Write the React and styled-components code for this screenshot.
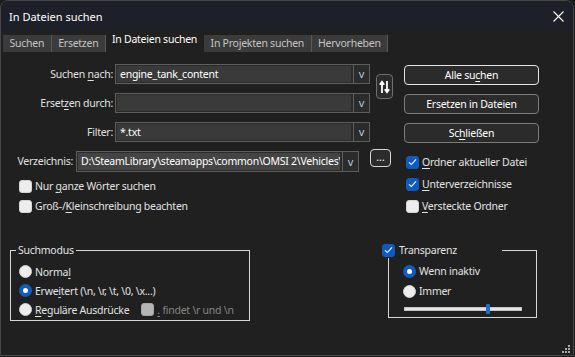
import React from 'react';
import styled, { createGlobalStyle } from 'styled-components';

const GlobalStyle = createGlobalStyle`
  html, body { margin: 0; padding: 0; background: #1a1a1a; }
  body {
    font-family: "Noto Sans", "Open Sans", sans-serif;
    font-size: 10.5px;
    letter-spacing: -0.25px;
    color: #e2e2e2;
  }
  * { box-sizing: border-box; }
  fieldset { min-inline-size: 0; }
`;

const Window = styled.div`
  position: relative;
  width: 574px;
  height: 356px;
  background: #202020;
  border: 1px solid #474747;
  border-radius: 8px 8px 0 0;
  overflow: hidden;
  display: flex;
  flex-direction: column;
`;

const TitleBar = styled.div`
  height: 30px;
  flex: none;
  background: #1d2029;
  display: flex;
  align-items: center;
  justify-content: space-between;
  padding: 0 9px 0 8px;
  font-size: 11px;
  letter-spacing: 0;
  color: #ffffff;
`;

const TabBar = styled.div`
  height: 21px;
  flex: none;
  display: flex;
  align-items: flex-end;
  padding-left: 2px;
`;

const Tab = styled.div`
  height: ${p => (p.$active ? 21 : 17)}px;
  line-height: ${p => (p.$active ? 16 : 17)}px;
  padding: 0 ${p => (p.$active ? 6 : 6.5)}px;
  background: ${p => (p.$active ? '#202020' : '#3b3b3b')};
  color: ${p => (p.$active ? '#ffffff' : '#c4c4c4')};
  border-right: 1px solid ${p => (p.$active ? '#202020' : '#595959')};
  white-space: nowrap;
`;

const Main = styled.div`
  flex: 1;
  display: flex;
  flex-direction: column;
  padding-top: 12px;
`;

const TopGrid = styled.div`
  display: grid;
  grid-template-columns: 394px 135px;
  column-gap: 9px;
  align-items: start;
`;

const LeftCol = styled.div`
  display: flex;
  flex-direction: column;
`;

const TopFields = styled.div`
  display: flex;
  align-items: flex-start;
`;

const FieldStack = styled.div`
  display: flex;
  flex-direction: column;
  gap: 9px;
`;

const FieldRow = styled.div`
  display: flex;
  align-items: center;
  height: 20px;
`;

const Label = styled.div`
  width: ${p => p.$w}px;
  text-align: right;
  color: #e0e0e0;
  white-space: nowrap;
  flex: none;
`;

const Combo = styled.div`
  display: flex;
  flex: none;
  width: ${p => p.$w}px;
  height: ${p => p.$h || 20}px;
  margin-left: ${p => p.$ml || 0}px;
  margin-top: ${p => p.$mt || 0}px;
  border: 1px solid #5e5e5e;
  background: #2b2b2b;
`;

const EditWrap = styled.div`
  flex: 1;
  min-width: 0;
  display: flex;
  padding: 1px 2px 1px 1px;
  overflow: hidden;
`;

const Edit = styled.div`
  flex: 1;
  min-width: 0;
  background: ${p => (p.$sel ? '#444444' : '#3a3a3a')};
  color: #ffffff;
  padding-left: 3px;
  line-height: ${p => p.$lh || 16}px;
  white-space: nowrap;
  overflow: hidden;
`;

const Arrow = styled.div`
  width: 16px;
  flex: none;
  border-left: 1px solid #5e5e5e;
  display: flex;
  align-items: center;
  justify-content: center;
  color: #b4c6dc;
  font-size: 11px;
  padding-bottom: 1px;
`;

const SwapButton = styled.div`
  width: 17px;
  height: 25px;
  margin: 10px 0 0 6px;
  border: 1px solid #6e6e6e;
  border-radius: 4px;
  background: #2b2b2b;
  display: flex;
  align-items: center;
  justify-content: center;
`;

const DirRow = styled.div`
  display: flex;
  align-items: flex-start;
  margin-top: 7px;
`;

const DirLabel = styled(Label)`
  height: 21px;
  line-height: 21px;
  margin-top: 2px;
`;

const DotsButton = styled.div`
  width: 21px;
  height: 18px;
  margin-left: 11px;
  border: 1px solid #d6d6d6;
  border-radius: 4px;
  background: #2b2b2b;
  color: #ffffff;
  display: flex;
  align-items: center;
  justify-content: center;
  line-height: 1;
  letter-spacing: 0;
  padding-bottom: 2px;
`;

const CheckList = styled.div`
  display: flex;
  flex-direction: column;
  margin-top: ${p => p.$mt || 0}px;
  padding-left: ${p => p.$pl || 0}px;
`;

const CheckRow = styled.div`
  display: flex;
  align-items: center;
  gap: ${p => p.$gap || 3}px;
  height: ${p => p.$h || 20}px;
  margin-left: ${p => p.$ml || 0}px;
  color: ${p => (p.$dim ? '#858585' : '#e2e2e2')};
  white-space: nowrap;
`;

const Box = styled.span`
  width: 13px;
  height: 13px;
  flex: none;
  border-radius: 3px;
  background: ${p => (p.$on ? '#0f5cbc' : p.$disabled ? '#cfcfcf' : '#ededed')};
  border: 1px solid ${p => (p.$on ? '#0f5cbc' : p.$disabled ? '#bdbdbd' : '#d4d4d4')};
  opacity: ${p => (p.$disabled ? 0.85 : 1)};
  display: flex;
  align-items: center;
  justify-content: center;
`;

const Radio = styled.span`
  width: 13px;
  height: 13px;
  flex: none;
  border-radius: 50%;
  background: ${p => (p.$on ? '#ffffff' : '#ededed')};
  border: ${p => (p.$on ? '4px solid #0f5cbc' : '1px solid #d0d0d0')};
`;

const Key = styled.span`
  text-decoration: underline;
  text-underline-offset: 2px;
`;

const RightCol = styled.div`
  display: flex;
  flex-direction: column;
  margin-top: 1px;
`;

const ButtonStack = styled.div`
  display: flex;
  flex-direction: column;
  gap: 9px;
`;

const Button = styled.div`
  height: 20px;
  border: 1px solid ${p => (p.$default ? '#e4e4e4' : '#7c7c7c')};
  border-radius: 4px;
  background: #2b2b2b;
  color: #ffffff;
  display: flex;
  align-items: center;
  justify-content: center;
  white-space: nowrap;
`;

const Bottom = styled.div`
  display: flex;
  align-items: flex-start;
  padding: 0 36px 0 9px;
  margin-top: 25px;
`;

const Group = styled.fieldset`
  margin: 0 0 0 ${p => (p.$right ? 'auto' : '0')};
  width: ${p => p.$w}px;
  border: 1px solid #d8d8d8;
  padding: 0 0 1px ${p => p.$pl}px;
  display: flex;
  flex-direction: column;
`;

const Legend = styled.legend`
  padding: 0 2px;
  height: 16px;
  line-height: 16px;
  color: #e2e2e2;
`;

const CheckLegend = styled.legend`
  padding: 0;
  margin-left: -21px;
  width: 120px;
  height: 16px;
  display: flex;
  align-items: center;
  gap: 4px;
  color: #e2e2e2;
`;

const GroupRows = styled.div`
  display: flex;
  flex-direction: column;
  padding-top: ${p => p.$pt || 0}px;
  margin-left: ${p => p.$ml || 0}px;
`;

const Slider = styled.div`
  position: relative;
  width: 118px;
  height: 4px;
  margin: 6px 0 5px 1px;
  background: #e4e4e4;
  border: 1px solid #c4c4c4;
`;

const Thumb = styled.span`
  position: absolute;
  top: -4px;
  width: 4px;
  height: 10px;
  background: #1a6fd2;
  border-radius: 1px;
`;

const Grip = styled.svg`
  position: absolute;
  right: 2px;
  bottom: 1px;
`;

const Check = () => (
  <svg width="9" height="8" viewBox="0 0 9 8">
    <path d="M1 4.3 L3.4 6.5 L8 1.3" fill="none" stroke="#ffffff" strokeWidth="1.1" />
  </svg>
);

const CloseIcon = () => (
  <svg width="11" height="11" viewBox="0 0 11 11">
    <path d="M0.5 0.5 L10.5 10.5 M10.5 0.5 L0.5 10.5" stroke="#ffffff" strokeWidth="1.1" />
  </svg>
);

const SwapIcon = () => (
  <svg width="11" height="14" viewBox="0 0 11 14">
    <path d="M3 13 V2.5 M0.8 4.8 L3 1.8 L5.2 4.8" fill="none" stroke="#ffffff" strokeWidth="1.8" />
    <path d="M8 1 V11.5 M5.8 9.2 L8 12.2 L10.2 9.2" fill="none" stroke="#ffffff" strokeWidth="1.8" />
  </svg>
);

const Field = ({ label, value }) => (
  <FieldRow>
    <Label $w={112}>{label}</Label>
    <Combo $w={255} $ml={2}>
      <EditWrap>
        <Edit>{value}</Edit>
      </EditWrap>
      <Arrow>v</Arrow>
    </Combo>
  </FieldRow>
);

export default function App() {
  const dir = 'D:\\SteamLibrary\\steamapps\\common\\OMSI 2\\Vehicles\\';
  return (
    <>
      <GlobalStyle />
      <Window>
        <TitleBar>
          <span>In Dateien suchen</span>
          <CloseIcon />
        </TitleBar>
        <TabBar>
          <Tab>Suchen</Tab>
          <Tab>Ersetzen</Tab>
          <Tab $active>In Dateien suchen</Tab>
          <Tab>In Projekten suchen</Tab>
          <Tab>Hervorheben</Tab>
        </TabBar>
        <Main>
          <TopGrid>
            <LeftCol>
              <TopFields>
                <FieldStack>
                  <Field label={<>Suchen <Key>n</Key>ach:</>} value="engine_tank_content" />
                  <Field label={<>Erset<Key>z</Key>en durch:</>} value="" />
                  <Field label="Filter:" value="*.txt" />
                </FieldStack>
                <SwapButton>
                  <SwapIcon />
                </SwapButton>
              </TopFields>
              <DirRow>
                <DirLabel $w={72}>Verzeichnis:</DirLabel>
                <Combo $w={283} $h={21} $ml={3} $mt={2}>
                  <EditWrap>
                    <Edit $sel $lh={17}>{dir}</Edit>
                  </EditWrap>
                  <Arrow>v</Arrow>
                </Combo>
                <DotsButton>...</DotsButton>
              </DirRow>
              <CheckList $mt={4} $pl={18}>
                <CheckRow>
                  <Box />
                  <span>Nur <Key>g</Key>anze Wörter suchen</span>
                </CheckRow>
                <CheckRow>
                  <Box />
                  <span>Groß-/<Key>K</Key>leinschreibung beachten</span>
                </CheckRow>
              </CheckList>
            </LeftCol>
            <RightCol>
              <ButtonStack>
                <Button $default>Alle su<Key>c</Key>hen</Button>
                <Button>Ersetzen in Dateien</Button>
                <Button>Sc<Key>h</Key>ließen</Button>
              </ButtonStack>
              <CheckList $mt={8} $pl={2}>
                <CheckRow $h={22}>
                  <Box $on><Check /></Box>
                  <span><Key>O</Key>rdner aktueller Datei</span>
                </CheckRow>
                <CheckRow $h={22}>
                  <Box $on><Check /></Box>
                  <span><Key>U</Key>nterverzeichnisse</span>
                </CheckRow>
                <CheckRow $h={22}>
                  <Box />
                  <span><Key>V</Key>ersteckte Ordner</span>
                </CheckRow>
              </CheckList>
            </RightCol>
          </TopGrid>
          <Bottom>
            <Group $w={240} $pl={5}>
              <Legend>Suchmodus</Legend>
              <GroupRows $pt={4} $ml={3}>
                <CheckRow $h={19}>
                  <Radio />
                  <span>Norma<Key>l</Key></span>
                </CheckRow>
                <CheckRow $h={19}>
                  <Radio $on />
                  <span>Erwe<Key>i</Key>tert (\n, \r, \t, \0, \x...)</span>
                </CheckRow>
                <CheckRow $h={19}>
                  <Radio />
                  <span><Key>R</Key>eguläre Ausdrücke</span>
                  <CheckRow $dim $h={19} $ml={9}>
                    <Box $disabled />
                    <span><Key>.</Key> findet \r und \n</span>
                  </CheckRow>
                </CheckRow>
              </GroupRows>
            </Group>
            <Group $right $w={149} $pl={14}>
              <CheckLegend>
                <Box $on><Check /></Box>
                <span>Transparenz</span>
              </CheckLegend>
              <GroupRows $pt={3}>
                <CheckRow $h={20}>
                  <Radio $on />
                  <span>Wenn inaktiv</span>
                </CheckRow>
                <CheckRow $h={20}>
                  <Radio />
                  <span>Immer</span>
                </CheckRow>
                <Slider>
                  <Thumb style={{ left: '69.5%' }} />
                </Slider>
              </GroupRows>
            </Group>
          </Bottom>
          <Grip width="10" height="10" viewBox="0 0 10 10">
            <g fill="#a8a8a8">
              <rect x="7" y="1" width="2" height="2" />
              <rect x="4" y="4" width="2" height="2" />
              <rect x="7" y="4" width="2" height="2" />
              <rect x="1" y="7" width="2" height="2" />
              <rect x="4" y="7" width="2" height="2" />
              <rect x="7" y="7" width="2" height="2" />
            </g>
          </Grip>
        </Main>
      </Window>
    </>
  );
}
